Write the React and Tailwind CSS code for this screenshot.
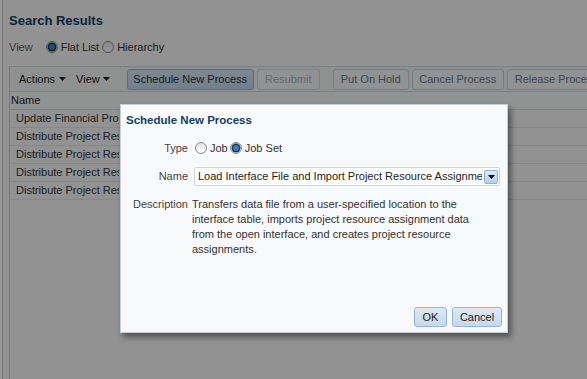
import React from 'react';

const Caret = ({ color = '#1a1a1a' }) => (
  <svg width="7" height="4" viewBox="0 0 7 4" className="shrink-0">
    <path d="M0 0h7L3.5 4z" fill={color} />
  </svg>
);

function Radio({ checked }) {
  return (
    <span className="w-[12px] h-[12px] shrink-0 rounded-full border border-[#8a8a8a] bg-linear-to-b from-[#e4e4e4] to-[#fdfdfd] flex items-center justify-center">
      {checked && (
        <span className="w-[6px] h-[6px] rounded-full bg-[#2f7fc8] shadow-[0_0_0_1.5px_#22364a]" />
      )}
    </span>
  );
}

const rows = [
  'Update Financial Project Performance Data',
  'Distribute Project Resource Assignments',
  'Distribute Project Resource Assignments',
  'Distribute Project Resource Assignments',
  'Distribute Project Resource Assignments',
];

export default function App() {
  return (
    <div className="relative w-[587px] h-[379px] overflow-hidden bg-[#f4f4f4] font-['Liberation_Sans',Arial,sans-serif] text-[11px] text-[#333]">
      {/* page underneath */}
      <div className="flex h-full">
        <div className="w-[3px] shrink-0 bg-[#fdfdfd] border-r border-[#c4c4c4]" />
        <main className="flex-1 min-w-0 pl-[6px] flex flex-col">
          <h1 className="mt-[13px] text-[13px] leading-[16px] font-bold text-[#0b3b60]">Search Results</h1>
          <div className="mt-[10px] h-[16px] flex items-center">
            <span className="text-[#555]">View</span>
            <label className="ml-[13px] flex items-center gap-[3px]">
              <Radio checked />
              Flat List
            </label>
            <label className="ml-[3px] flex items-center gap-[3px]">
              <Radio />
              Hierarchy
            </label>
          </div>

          <section className="mt-[11px] flex-1 flex flex-col border-l border-[#c5c9cd]">
            {/* toolbar */}
            <div className="h-[26px] shrink-0 flex items-center pl-[9px] bg-[#eff0f1] border-t border-b border-[#d2d6da] whitespace-nowrap">
              <span className="flex items-center gap-[4px] text-[#222]">
                Actions <Caret />
              </span>
              <span className="ml-[10px] flex items-center gap-[3px] text-[#222]">
                View <Caret />
              </span>
              <span className="ml-[12px] w-px h-[24px] bg-[#d6dadd]" />
              <button className="ml-[5px] w-[127px] h-[21px] shrink-0 rounded-[3px] border border-[#9bb4cc] bg-linear-to-b from-[#d3e3f3] to-[#bed3e8] text-[#2a2f36]">
                Schedule New Process
              </button>
              <button className="ml-[3px] w-[63px] h-[21px] shrink-0 rounded-[3px] border border-[#d0d4d8] bg-[#f2f3f5] text-[#a6afb8]">
                Resubmit
              </button>
              <span className="ml-[6px] w-px h-[18px] bg-[#d6dadd]" />
              <button className="ml-[7px] w-[76px] h-[21px] shrink-0 rounded-[3px] border border-[#c9cdd2] bg-[#f2f3f5] text-[#6a7686]">
                Put On Hold
              </button>
              <button className="ml-[3px] w-[92px] h-[21px] shrink-0 rounded-[3px] border border-[#c9cdd2] bg-[#f2f3f5] text-[#6a7686]">
                Cancel Process
              </button>
              <button className="ml-[3px] w-[100px] h-[21px] shrink-0 rounded-[3px] border border-[#c9cdd2] bg-[#f2f3f5] text-[#6a7686] text-left pl-[7px] overflow-hidden">
                Release Process
              </button>
            </div>

            {/* table */}
            <div className="h-[18px] shrink-0 flex items-center pl-[1px] border-b border-[#d5d8db] bg-[#f2f3f4] text-[#222]">
              Name
            </div>
            {rows.map((r, i) => (
              <div key={i} className="h-[18px] shrink-0 flex items-center border-b border-[#dfe2e5] text-[#333]">
                <span className="w-[109px] pl-[6px] overflow-hidden whitespace-nowrap">{r}</span>
              </div>
            ))}
          </section>
        </main>
      </div>

      {/* modal overlay */}
      <div className="absolute inset-0 bg-black/40" />

      {/* dialog */}
      <div className="absolute left-[120px] top-[104px] w-[388px] h-[229px] flex flex-col bg-[#f8f9fa] border border-[#c6ced6] shadow-[3px_4px_6px_rgba(0,0,0,0.45)]">
        <h2 className="mt-[7px] ml-[5px] text-[11.5px] leading-[16px] font-bold text-[#113f6b]">
          Schedule New Process
        </h2>

        <div className="mt-[11px] h-[18px] flex items-center">
          <span className="w-[67px] text-right text-[#444]">Type</span>
          <label className="ml-[7px] flex items-center gap-[3px] text-[#333]">
            <Radio />
            Job
          </label>
          <label className="ml-[2px] flex items-center gap-[3px] text-[#333]">
            <Radio checked />
            Job Set
          </label>
        </div>

        <div className="mt-[10px] h-[19px] flex items-center">
          <span className="w-[67px] text-right text-[#444]">Name</span>
          <div className="ml-[6px] w-[306px] h-[19px] flex items-center pl-[3px] pr-[1px] bg-white border border-[#cdd5dd] rounded-[2px]">
            <span className="flex-1 min-w-0 overflow-hidden whitespace-nowrap text-[#222]">
              Load Interface File and Import Project Resource Assignments
            </span>
            <span className="ml-[2px] w-[14px] h-[14px] shrink-0 rounded-[2px] border border-[#8fb0d3] bg-linear-to-b from-[#dcebfa] to-[#b3cfee] flex items-center justify-center">
              <Caret color="#111" />
            </span>
          </div>
        </div>

        <div className="mt-[11px] flex items-start leading-[15px]">
          <span className="w-[67px] text-right text-[#444]">Description</span>
          <p className="ml-[4px] w-[290px] text-[#333]">
            Transfers data file from a user-specified location to the interface table, imports project resource
            assignment data from the open interface, and creates project resource assignments.
          </p>
        </div>

        <div className="mt-auto mr-[5px] mb-[5px] flex justify-end gap-[5px]">
          <button className="w-[33px] h-[20px] rounded-[3px] border border-[#94b6da] bg-linear-to-b from-[#dde9f6] to-[#c4d9ef] text-[#222]">
            OK
          </button>
          <button className="w-[50px] h-[20px] rounded-[3px] border border-[#94b6da] bg-linear-to-b from-[#dde9f6] to-[#c4d9ef] text-[#222]">
            Cancel
          </button>
        </div>
      </div>
    </div>
  );
}
